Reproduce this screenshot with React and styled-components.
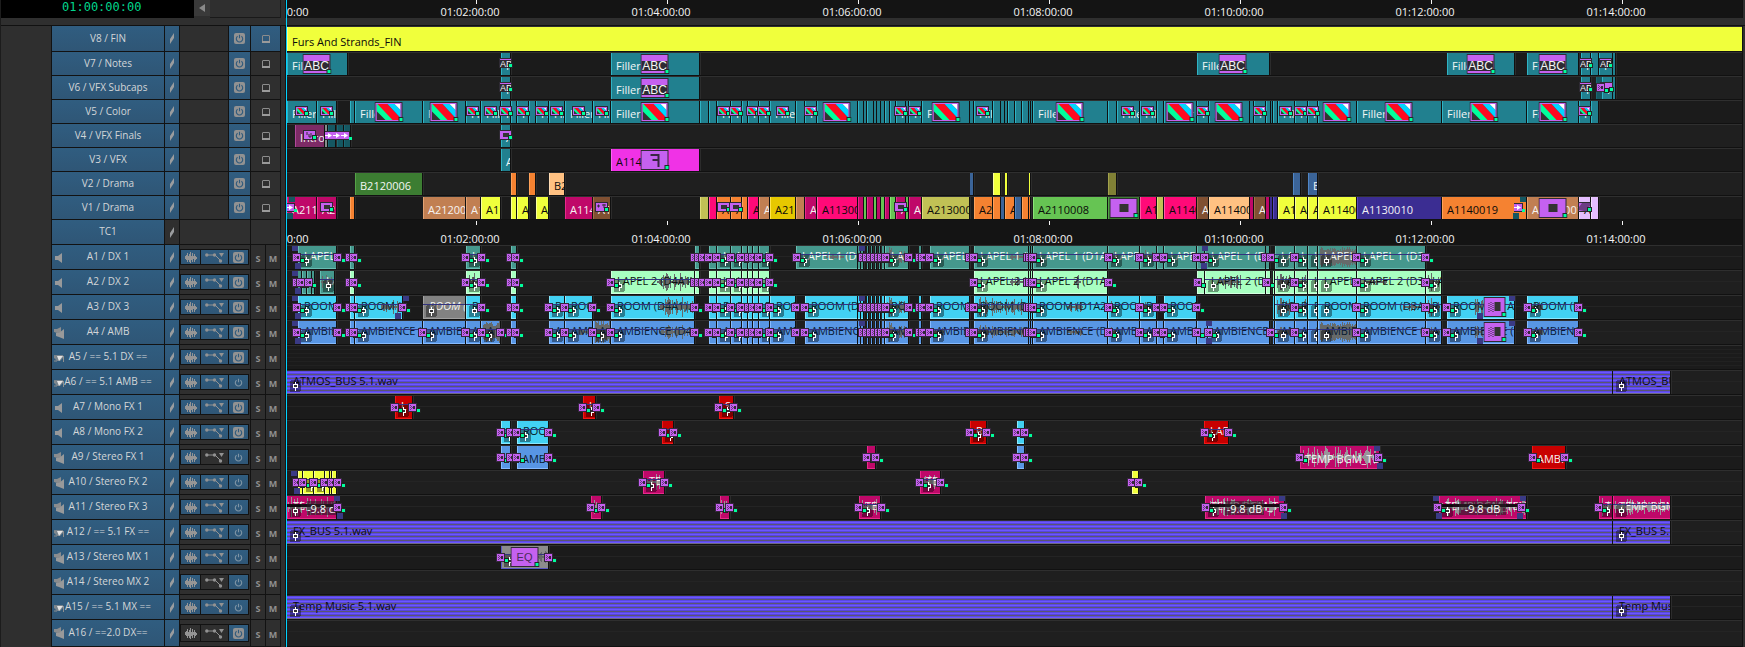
import React from "react";
import styled, { createGlobalStyle, css } from "styled-components";

const GlobalStyle = createGlobalStyle`
  * { box-sizing: border-box; }
  html, body { margin: 0; background: #2f2f2f; }
  body { font-family: "Open Sans", "Noto Sans", sans-serif; font-size: 11px; line-height: 15px; overflow-x: hidden; }
  button { font: inherit; padding: 0; margin: 0; border: 0; cursor: pointer; }
`;

/* ---------- palette: fill, light edge, text ---------- */

const PALETTE = {
  lemon: ["#f0ff3c", "#fbff8a", "#0a0a0a"],
  cyan: ["#21808f", "#2fb3c4", "#f2f6f6"],
  deep: ["#155761", "#1a6874", "#f2f6f6"],
  plum: ["#7d2b66", "#b0489a", "#f2f2f2"],
  ash: ["#858d8b", "#aab0ae", "#f2f2f2"],
  magenta: ["#f032e6", "#ff62f6", "#0a0a0a"],
  forest: ["#3c7d32", "#55a348", "#f2f6f2"],
  orange: ["#f58231", "#ffa25a", "#0a0a0a"],
  peach: ["#ffc182", "#ffdcb4", "#0a0a0a"],
  denim: ["#3b6498", "#4f86c6", "#f2f2f2"],
  yellow: ["#f0ff3c", "#fbff9a", "#0a0a0a"],
  olive: ["#808035", "#a2a24c", "#0a0a0a"],
  crimson: ["#bf0869", "#e82a8c", "#f6f2f4"],
  tan: ["#c17f52", "#e2a274", "#f6f2f0"],
  brown: ["#805032", "#a56d49", "#f6f2f0"],
  khaki: ["#c1c155", "#dede7c", "#0a0a0a"],
  pink: ["#ff0a78", "#ff5aa6", "#0a0a0a"],
  gold: ["#e6c800", "#ffe54a", "#0a0a0a"],
  green: ["#66c453", "#8be478", "#0a0a0a"],
  indigo: ["#3b2d92", "#5848c0", "#f2f2f6"],
  lilac: ["#e4bdff", "#f3e0ff", "#0a0a0a"],
  teal: ["#45988d", "#68bdb2", "#f4f8f8"],
  mint: ["#a8ffc1", "#d2ffe0", "#0c140f"],
  sky: ["#42d1f3", "#8ae8ff", "#06222b"],
  azure: ["#5896e4", "#86bbff", "#081a33"],
  gray: ["#828282", "#a0a0a0", "#f2f2f2"],
  red: ["#c80000", "#f01818", "#f6f0f0"],
  slate: ["#8c8c8c", "#5a57c4", "#f2f2f2"],
  bus: ["#5b49e8", "#6f6a80", "#0a0a12"],
};

/* ---------- timeline data: [start, end, colour, label, options] ---------- */

const run = (color, spans) =>
  spans.split(" ").map((s) => {
    const [a, b] = s.split("-").map(Number);
    return [a, b, color];
  });

const BIG = { fx: "color", big: true };
const SMALL = { fx: "color" };
const colorClips = (spans, label, opts) =>
  spans.split(" ").map((s) => {
    const [a, b] = s.split("-").map(Number);
    return [a, b, "cyan", label, opts];
  });

const ABC = { fx: "title", big: true };
const ABCS = { fx: "title" };

const VIDEO = [
  { name: "V8 / FIN", tall: true, active: true, clips: [[0, 4000, "lemon", "Furs And Strands_FIN"]] },
  {
    name: "V7 / Notes",
    clips: [
      [0, 60, "cyan", "Filler", ABC], [214, 223, "cyan", "F", ABCS], [324, 412, "cyan", "Filler", ABC],
      [910, 982, "cyan", "Filler", ABC], [1160, 1227, "cyan", "Filler", ABC], [1240, 1291, "cyan", "Filler", ABC],
      [1294, 1303, "cyan", "F", ABCS], [1304, 1311, "cyan"], [1312, 1325, "cyan", "F", ABCS], [1326, 1328, "cyan"],
    ],
  },
  {
    name: "V6 / VFX Subcaps",
    clips: [
      [214, 223, "cyan", "F", ABCS], [324, 412, "cyan", "Filler", ABC], [1294, 1303, "cyan", "F", ABCS],
      [1309, 1315, "deep"], [1315, 1325, "cyan", "F", { fx: "plain" }], [1326, 1328, "cyan"],
    ],
    dissolves: [1309],
  },
  {
    name: "V5 / Color",
    clips: [
      ...colorClips("0-29 30-49 179-193 194-213 214-223 230-241 249-261 262-277 278-305 306-323 430-443 444-454 461-471 472-482 483-508 518-529 609-618 622-634 687-705 830-852 853-869 910-921 967-978 991-1007 1008-1020 1021-1030 1292-1303", "Filler", SMALL),
      ...colorClips("68-135 136-178 324-412 530-570 635-682 746-820 877-909 922-962 1031-1069 1070-1154 1155-1239 1240-1291", "Filler", BIG),
      ...run("cyan", "63-67 224-229 242-248 413-421 422-429 455-460 509-517 571-576 577-579 580-586 587-589 590-593 594-597 598-602 603-608 619-621 683-686 706-713 714-717 718-720 721-727 728-734 735-741 742-743 744-745 821-829 870-876 963-966 979-983 984-985 986-990 1304-1311"),
    ],
  },
  {
    name: "V4 / VFX Finals",
    clips: [
      [8, 37, "plum", "Intro", { fx: "paint" }], [38, 40, "ash"], [41, 48, "deep"], [50, 56, "deep"], [57, 63, "deep"],
      [214, 223, "cyan", "A", { fx: "pip" }],
    ],
    arrows: [38, 46, 54],
  },
  { name: "V3 / VFX", clips: [[214, 223, "cyan", "A"], [324, 412, "magenta", "A1140", { fx: "flip", big: true }]] },
  {
    name: "V2 / Drama",
    clips: [
      [68, 135, "forest", "B2120006"], ...run("orange", "224-229 242-248"), [262, 277, "peach", "B2"],
      [683, 686, "denim"], ...run("yellow", "706-713 718-720 742-743"), [821, 829, "olive"],
      [1006, 1013, "denim"], [1021, 1030, "denim", "B"],
    ],
  },
  {
    name: "V1 / Drama",
    clips: [
      [0, 29, "crimson", "A2110"], [30, 49, "crimson", "A2", { fx: "pip" }], [63, 67, "orange"],
      [136, 178, "tan", "A212000"], [179, 193, "tan", "A1"], [194, 213, "yellow", "A1"], [224, 229, "yellow"],
      [230, 241, "yellow", "A"], [249, 261, "yellow", "A"], [278, 305, "crimson", "A1140"], [306, 323, "brown", "A1", { fx: "move" }],
      [413, 421, "khaki"], [422, 429, "pink"], [430, 443, "orange", "A", { fx: "pip" }], [444, 454, "orange", "A", { fx: "pip" }],
      [455, 460, "orange"], [461, 471, "pink", "A"], [472, 482, "tan", "A"], [483, 508, "gold", "A21"], [509, 517, "tan"],
      [518, 529, "crimson", "A"], [530, 570, "pink", "A113000"], ...run("crimson", "571-576 580-586 590-593 598-602"),
      ...run("green", "577-579 587-589 594-597 603-608 619-621"), [609, 618, "crimson", "A", { fx: "pip" }],
      [622, 634, "crimson", "A"], [635, 682, "khaki", "A2130000"], [687, 705, "orange", "A2"], [706, 713, "orange"],
      [714, 717, "denim"], [718, 727, "orange", "A"], [728, 734, "denim"], ...run("orange", "735-741 742-743"),
      [746, 820, "green", "A2110008"], [821, 852, "forest", "", { fx: "pip", big: true }], [853, 869, "pink", "A1"],
      [870, 876, "khaki"], [877, 909, "pink", "A1140"], [910, 921, "brown", "A"], [922, 962, "peach", "A114000"],
      [963, 966, "crimson"], [967, 978, "brown", "A"], [979, 982, "crimson"], ...run("indigo", "983-985 986-990"),
      [991, 1007, "yellow", "A1"], [1008, 1020, "yellow", "A"], [1021, 1030, "yellow", "A"], [1031, 1069, "yellow", "A11400"],
      [1070, 1154, "indigo", "A1130010"], [1155, 1239, "orange", "A1140019"],
      [1240, 1291, "tan", "A2110001", { fx: "pip", big: true }], [1292, 1303, "lilac", "A", { fx: "warp" }], [1304, 1311, "lilac"],
    ],
    fades: [[2, "top", "deep"], [0, "bottom", "deep"], [1233, "top", "deep"], [1226, "bottom", "deep"]],
    arrows: [-1, 1227],
  },
];

const V = { gain: true };
const W = (a, b, amp = 8) => ({ gain: true, wave: [a, b, amp] });
const HEAVY = { gain: true, wave: [2, 200, 11], solid: true };
const CROWD = [417, 425, 439, 449, 457, 461, 467, 478];
const STACK = [571, 575, 579, 583, 587, 590, 594];
const TRIPLE = [736, 738, 741];

const crowd = (c, label) => [
  ...run(c, "422-429 455-460 461-465 466-471"),
  [430, 443, c, label, V], [444, 454, c, label, V], [472, 482, c, label, V],
];
const stack = (c, label) => [
  ...run(c, "571-573 574-576 580-581 584-585 588-589 592-593 595-597 632-634"),
  [598, 621, c, label, W(1, 20, 10)],
];

const AUDIO = [
  {
    name: "A1 / DX 1", kind: "mono", on: true,
    clips: [
      [11, 49, "teal", "LAPEL 1", V], ...run("teal", "63-67 224-229 408-412 742-743 744-745 870-876 910-917 979-982"),
      [179, 193, "teal", "L", V], ...crowd("teal", "L"), [509, 570, "teal", "LAPEL 1 (D1A", W(30, 48, 3)], ...stack("teal", "LA"),
      [643, 682, "teal", "LAPEL 1", V], [687, 741, "teal", "LAPEL 1 (D", W(36, 52, 3)], [746, 820, "teal", "LAPEL 1 (D1A2", V],
      [821, 852, "teal", "LAPEL 1", W(5, 10, 7)], [853, 869, "teal", "L", W(4, 14, 8)], [877, 909, "teal", "LAPEL 1", V],
      [918, 978, "teal", "LAPEL 1 (D", V], [988, 1007, "teal", "LA", V], [1008, 1020, "teal", "L", V], [1021, 1030, "teal", "L", V],
      [1031, 1069, "teal", "LAPEL 1", HEAVY], [1070, 1138, "teal", "LAPEL 1 (D3A", V],
    ],
    dissolves: [5, 46, 58, 62, 174, 190, 219, 224, 403, 407, 411, ...CROWD, 505, ...STACK, 617, 628, 631, 638, 678, 682, ...TRIPLE, 817, 848, 865, 872, 905, 913, 974, 979, 1003, 1065, 1134],
    fades: [[5, "top"], [8, "bottom"], [572, "top"], [915, "top"], [914, "bottom"]],
  },
  {
    name: "A2 / DX 2", kind: "mono", on: true,
    clips: [
      ...run("teal", "11-14 15-19 20-24 25-27"), [33, 47, "teal", "LA", W(1, 13, 7)],
      ...run("mint", "63-67 224-229 408-412 742-743 744-745 910-917 979-983 986-987"), [179, 193, "mint", "L", W(3, 12, 9)],
      [324, 407, "mint", "LAPEL 2 (D4A1", W(46, 82, 9)], ...crowd("mint", "L"), [687, 741, "mint", "LAPEL 2 (", W(36, 52, 4)],
      [746, 820, "mint", "LAPEL 2 (D1A", W(41, 48, 11)], [918, 978, "mint", "LAPEL 2 (D", W(14, 36, 7)],
      [988, 1007, "mint", "LA", W(2, 18, 9)], [1008, 1020, "mint", "L", W(1, 12, 8)], [1021, 1030, "mint", "L", V],
      [1031, 1069, "mint", "LAPEL 2", V], [1070, 1138, "mint", "LAPEL 2 (D3A", W(8, 30, 4)], [1139, 1154, "mint", "LA", W(2, 14, 9)],
    ],
    dissolves: [5, 9, 17, 58, 62, 174, 190, 219, 224, 319, 403, 407, 411, ...CROWD, 682, ...TRIPLE, 817, 906, 975, 1003, 1065, 1134],
    fades: [[5, "top"], [8, "bottom"]],
  },
  {
    name: "A3 / DX 3", kind: "mono", on: true,
    clips: [
      [11, 49, "sky", "ROOM (", V], ...run("sky", "63-67 224-229 742-743 744-745 986-987"), [68, 115, "sky", "ROOM (", W(26, 44, 7)],
      [136, 178, "gray", "ROOM (D", { gain: true, italic: true }], [179, 193, "sky", "R", V], [262, 277, "sky", "R", V],
      [278, 305, "sky", "ROOM", V], [324, 407, "sky", "ROOM (D4A1).", W(48, 82, 10)], ...crowd("sky", "R"),
      [483, 508, "sky", "ROOM", V], [518, 570, "sky", "ROOM (D1", V], ...stack("sky", "RO"), [643, 682, "sky", "ROOM (", V],
      [687, 741, "sky", "ROOM (D1", W(4, 50, 10)], [746, 820, "sky", "ROOM (D1A2", W(34, 50, 7)], [821, 852, "sky", "ROOM", W(2, 6, 7)],
      [853, 869, "sky", "R", W(4, 14, 6)], [877, 909, "sky", "ROOM", V], [988, 1007, "sky", "RO", W(2, 18, 10)],
      [1008, 1020, "sky", "R", W(1, 12, 9)], [1021, 1030, "sky", "R", V], [1031, 1069, "sky", "ROOM (", V],
      [1070, 1138, "sky", "ROOM (D3A", W(46, 66, 5)], [1139, 1154, "sky", "R", W(2, 14, 9)],
      [1160, 1227, "sky", "ROOM (D1A", { gain: true, wave: [28, 36, 9], fx: "dissolve", big: true }],
      [1240, 1291, "sky", "ROOM (D", W(4, 16, 7)],
    ],
    dissolves: [5, 46, 58, 62, 111, 190, 219, 224, 257, 273, 301, 319, 403, ...CROWD, 504, 513, ...STACK, 617, 628, 631, 638, 678, 682, ...TRIPLE, 817, 848, 865, 872, 905, 1003, 1065, 1134, 1155, 1236, 1287],
    fades: [[5, "top"], [8, "bottom"], [116, "top"], [108, "bottom"], [572, "top"], [1222, "top"], [1190, "bottom"]],
  },
  {
    name: "A4 / AMB", kind: "stereo", on: true,
    clips: [
      [11, 49, "azure", "AMBIENCE", V], ...run("azure", "63-67 224-229 742-743 744-745 870-876 986-987"), [68, 135, "azure", "AMBIENCE (", V],
      [136, 178, "azure", "AMBIENCE", V], [179, 193, "azure", "A", V], [194, 213, "azure", "A", HEAVY], [262, 277, "azure", "A", V],
      [278, 305, "azure", "AMBI", W(14, 24, 4)], [306, 323, "azure", "A", HEAVY], [324, 407, "azure", "AMBIENCE (D4A", W(48, 82, 7)],
      ...crowd("azure", "A"), [483, 508, "azure", "AMBI", V], [518, 570, "azure", "AMBIENCE", V], ...stack("azure", "AM"),
      [643, 682, "azure", "AMBIENCE", W(4, 14, 5)], [687, 741, "azure", "AMBIENCE (", W(4, 50, 7)],
      [746, 820, "azure", "AMBIENCE (D1", W(34, 50, 5)], [821, 852, "azure", "AMBIENCE", W(2, 8, 6)], [853, 869, "azure", "A", V],
      [877, 909, "azure", "AMBIENCE", V], [910, 920, "azure"], [921, 982, "azure", "AMBIENCE (", V], [988, 1007, "azure", "AM", W(2, 18, 5)],
      [1008, 1020, "azure", "A", V], [1021, 1030, "azure", "A", V], [1031, 1069, "azure", "AMBIENCE", HEAVY],
      [1070, 1138, "azure", "AMBIENCE (D", V], [1139, 1154, "azure", "A", W(2, 14, 5)],
      [1160, 1227, "azure", "AMBIENCE (D", { gain: true, wave: [28, 36, 6], fx: "dissolve", big: true }],
      [1240, 1291, "azure", "AMBIENCE", W(4, 16, 6)],
    ],
    dissolves: [5, 46, 58, 62, 131, 174, 190, 209, 219, 224, 257, 273, 301, 319, 403, ...CROWD, 504, 513, ...STACK, 617, 628, 631, 638, 678, 682, ...TRIPLE, 817, 848, 865, 872, 905, 917, 979, 1003, 1065, 1134, 1155, 1236, 1287],
    fades: [[5, "top"], [8, "bottom"], [572, "top"], [919, "top"], [919, "bottom"], [1222, "top"], [1190, "bottom"]],
  },
  { name: "A5 / == 5.1 DX ==", kind: "surround", on: true, channels: 6 },
  { name: "A6 / == 5.1 AMB ==", kind: "surround", clips: [[0, 1325, "bus", "ATMOS_BUS 5.1.wav", V], [1326, 1383, "bus", "ATMOS_BUS 5.1.wav", V]] },
  {
    name: "A7 / Mono FX 1", kind: "mono", on: true,
    clips: [[108, 125, "red", "L", V], [296, 308, "red", "L", V], [432, 446, "red", "S", V]],
    dissolves: [103, 121, 291, 305, 427, 442],
  },
  {
    name: "A8 / Mono FX 2", kind: "mono", on: true,
    clips: [[214, 223, "sky", "", V], [230, 261, "sky", "ROOM", V], [375, 386, "red", "", V], [683, 699, "red", "R", V], [730, 737, "sky"], [917, 941, "red", "LAP", V]],
    dissolves: [209, 219, 225, 257, 371, 382, 678, 695, 725, 733, 913, 937],
  },
  {
    name: "A9 / Stereo FX 1", kind: "stereo", noAuto: true,
    clips: [
      [214, 223, "azure", "A", { low: true }], [230, 261, "azure", "AMBI", { low: true }], [580, 588, "crimson"], [730, 737, "azure"],
      [1013, 1092, "crimson", "TEMP BGM_TEN", { low: true, wave: [2, 78, 11], pale: true }], [1245, 1278, "red", "AMBI", { low: true }],
    ],
    dissolves: [209, 219, 225, 257, 575, 584, 725, 733, 1008, 1087, 1241, 1273],
    fades: [[1087, "top"], [1090, "bottom"]],
  },
  {
    name: "A10 / Stereo FX 2", kind: "stereo",
    clips: [
      ...run("yellow", "11-15 38-42 43-44 45-49 845-851"), [16, 26, "yellow", "", V], [27, 37, "yellow", "", V],
      [356, 377, "crimson", "TE", { gain: true, wave: [2, 20, 9], pale: true }], [633, 653, "crimson", "TE", { gain: true, wave: [2, 19, 9], pale: true }],
    ],
    dissolves: [5, 11, 22, 33, 40, 46, 351, 373, 628, 649, 840, 847],
    fades: [[4, "top"], [7, "bottom"]],
  },
  {
    name: "A11 / Stereo FX 3", kind: "stereo",
    clips: [
      [0, 49, "crimson", "TE", { gain: true, wave: [1, 48, 10], pale: true, db: "-9.8 dB" }],
      [304, 314, "crimson", "", { wave: [1, 9, 8], pale: true }], [433, 442, "crimson", "", { wave: [1, 8, 8], pale: true }],
      [572, 593, "crimson", "TE", { gain: true, wave: [2, 19, 9], pale: true }],
      [918, 997, "crimson", "TEMP BGM_T", { gain: true, wave: [1, 78, 9], pale: true, db: "-9.8 dB" }],
      [1152, 1239, "crimson", "TEMP BGM_TEN", { gain: true, wave: [1, 86, 9], pale: true, db: "-9.8 dB" }],
      [1312, 1325, "crimson", "T", { gain: true, wave: [1, 12, 10], pale: true }],
      [1326, 1383, "crimson", "TEMP BGM_T", { gain: true, wave: [1, 56, 9], pale: true }],
    ],
    dissolves: [46, 299, 310, 428, 438, 567, 590, 914, 992, 1146, 1230, 1307],
    fades: [[47, "top"], [50, "bottom"], [992, "top"], [994, "bottom"], [1146, "top"], [1149, "bottom"], [1233, "top"], [1230, "bottom"]],
  },
  { name: "A12 / == 5.1 FX ==", kind: "surround", clips: [[0, 1325, "bus", "FX_BUS 5.1.wav", V], [1326, 1383, "bus", "FX_BUS 5.1.wav", V]] },
  {
    name: "A13 / Stereo MX 1", kind: "stereo",
    clips: [[214, 261, "slate", "", { gain: true, fx: "eq", big: true, wave: [30, 46, 8] }]],
    dissolves: [209, 257],
  },
  { name: "A14 / Stereo MX 2", kind: "stereo", noAuto: true },
  { name: "A15 / == 5.1 MX ==", kind: "surround", clips: [[0, 1325, "bus", "Temp Music 5.1.wav", V], [1326, 1383, "bus", "Temp Music 5.1.wav", V]] },
  { name: "A16 / ==2.0 DX==", kind: "stereo", noAuto: true, noWave: true, on: true, last: true },
];

const TICKS = Array.from({ length: 8 }, (_, i) => ({
  at: i * 191 - 2,
  label: `01:${String(i * 2).padStart(2, "0")}:00:00`,
}));

/* ---------- icons ---------- */

const Glyph = styled.svg`
  display: block;
  flex: none;
`;

const PowerIcon = ({ on }) => (
  <Glyph width="11" height="11" viewBox="0 0 11 11" aria-hidden="true">
    {on && <rect width="11" height="11" rx="2" fill="#929292" />}
    <path d="M3.6 3.2a3.2 3.2 0 1 0 3.8 0M5.5 1.7v3.6" fill="none" stroke={on ? "#2f5a7c" : "#7f95a5"} strokeWidth="1.1" />
  </Glyph>
);

const MonitorIcon = () => (
  <Glyph width="8" height="8" viewBox="0 0 8 8" aria-hidden="true">
    <rect x=".5" y=".5" width="7" height="7" rx=".5" fill="none" stroke="#8c8c8c" />
    <path d="M0 7h8" stroke="#9a9a9a" strokeWidth="2" />
  </Glyph>
);

const SyncIcon = () => (
  <Glyph width="6" height="11" viewBox="0 0 6 11" aria-hidden="true">
    <path d="M5 0v5L1 11V6z" fill="#9a9c9e" />
  </Glyph>
);

const WaveIcon = () => (
  <Glyph width="12" height="11" viewBox="0 0 12 11" aria-hidden="true">
    <path d="M.5 4v3M1.500 3v5M2.500 1v9M3.500 4v4M4.500 2v8M5.500 0v11M6.500 4v4M7.500 1v9M8.500 4v3M9.500 2v8M10.500 4v4M11.500 5v2" stroke="#959595" />
  </Glyph>
);

const AutomationIcon = () => (
  <Glyph width="19" height="12" viewBox="0 0 19 12" aria-hidden="true">
    <path d="M2 4h8l6 6" fill="none" stroke="#929292" />
    <circle cx="1.800" cy="4" r="1.700" fill="#929292" />
    <circle cx="9.500" cy="4" r="1.700" fill="#929292" />
    <circle cx="15.500" cy="10" r="1.700" fill="#929292" />
    <path d="M14 2h5l-2.500 4z" fill="#929292" />
  </Glyph>
);

const SourceIcon = ({ kind }) => (
  <Glyph width="11" height="12" viewBox="0 0 11 12" aria-hidden="true">
    {kind === "mono" && <path d="M1 4h3l4-3v10L4 8H1z" fill="#98999a" />}
    {kind === "stereo" && (
      <>
        <path d="M0 2h3l4-2v6H3L0 5z" fill="#8a8c8e" />
        <path d="M2 6h3l5-4v10L5 10 2 9z" fill="#98999a" />
      </>
    )}
    {kind === "surround" && (
      <>
        <path d="M0 3h9v3L6 9H3L0 6z" fill="#77838c" />
        <path d="M3 4h6L5 9z" fill="#e4e4e4" />
        <path d="M0 9h3M9.500 4v6M0 5h2" stroke="#8f8f8f" />
      </>
    )}
  </Glyph>
);

const Dot = ({ x, y }) => (
  <>
    <rect x={x - 1} y={y - 1} width="5" height="5" fill="#26262a" />
    <rect x={x} y={y} width="3" height="3" fill="#00ff9c" />
  </>
);

const FX_FILL = "#c561f0";
const INK = "#2e2a33";

function FxIcon({ type, big }) {
  const w = big ? (type === "dissolve" ? 22 : 28) : 13;
  const h = big ? 20 : 10;
  return (
    <Glyph width={w + 1} height={h} viewBox={`0 0 ${w + 1} ${h}`} aria-hidden="true">
      <rect x="0" y="0" width={w} height={h} fill={INK} />
      <rect x="1" y="1" width={w - 2} height={h - 2} fill={FX_FILL} />
      {type === "color" && (
        <svg x="2" y="2" width={w - 4} height={h - 4} viewBox="0 0 24 16" preserveAspectRatio="none">
          <rect width="24" height="16" fill="#333" />
          <path d="M0 0h2l16 16H9L0 7z" fill="#00ff9c" />
          <path d="M1 0h10l13 14v2H16z" fill="#ff0a20" />
          <path d="M11 0h7l6 6v8z" fill="#00d5ff" />
          <path d="M18 0h6v6z" fill="#fff" />
        </svg>
      )}
      {type === "title" && big && (
        <>
          <rect x="1" y="7" width="26" height="10" fill="#2e2a33" />
          <text x="14" y="16" textAnchor="middle" fontFamily="Liberation Sans, sans-serif" fontSize="12" fill="#f4f4f4">ABC</text>
        </>
      )}
      {type === "title" && !big && (
        <svg x="1" y="0" width="11" height="10">
          <rect y="2" width="11" height="7" fill="#2e2a33" />
          <text x="0" y="9" fontFamily="Liberation Sans, sans-serif" fontSize="9" fill="#f4f4f4">ABC</text>
        </svg>
      )}
      {type === "pip" && <rect x={big ? 10 : 4} y={big ? 6 : 3} width={big ? 9 : 6} height={big ? 8 : 4} fill="#333" />}
      {type === "flip" && (
        <>
          <rect x="17" y="4" width="2" height="13" fill="#3a2545" />
          <rect x="10" y="4" width="8" height="2" fill="#3a2545" />
          <rect x="12" y="9" width="6" height="2" fill="#3a2545" />
        </>
      )}
      {type === "eq" && <text x="14" y="14" textAnchor="middle" fontFamily="Liberation Sans, sans-serif" fontSize="11" fill="#4a2c5a">EQ</text>}
      {type === "dissolve" && (
        <>
          <rect x="11" y="5" width="6" height="9" fill="#333" />
          <path d="M5.500 6v9M7.500 5v9M9.500 6v9" stroke="#333" strokeDasharray="1 1" />
        </>
      )}
      {type === "paint" && <path d="M4 2v3M6 4v3h2V3" fill="none" stroke="#333" />}
      {type === "move" && <path d="M2 4h3M3.500 2.500v3M7 3h4M9 2v4" fill="none" stroke="#333" />}
      {type === "warp" && <path d="M1 8V5l3-4h8v3L9 6v3H6z" fill="#6d3b85" />}
      <Dot x={w - 3} y={h - 4} />
    </Glyph>
  );
}

const DissolveIcon = () => (
  <Glyph width="13" height="10" viewBox="0 0 13 10" shapeRendering="crispEdges" aria-hidden="true">
    <rect width="9" height="9" fill="#35283d" />
    <rect x="1" y="1" width="7" height="7" fill={FX_FILL} />
    <path d="M5 3h2v3H5z" fill="#35283d" />
    <path d="M2 2h1v1H2zM3 3h1v1H3zM2 4h1v1H2zM4 4h1v1H4zM3 5h1v1H3zM2 6h1v1H2z" fill="#6a3a80" />
    <rect x="8" y="5" width="5" height="5" fill="#222" />
    <rect x="9" y="6" width="3" height="3" fill="#00ff9c" />
  </Glyph>
);

const ArrowIcon = () => (
  <Glyph width="11" height="9" viewBox="0 0 11 9" aria-hidden="true">
    <rect width="9" height="9" fill={INK} />
    <rect x="0" y="1" width="8" height="7" fill={FX_FILL} />
    <path d="M0 4h3V2l4 2.500L3 7V5H0z" fill="#fff" />
    <rect x="8" y="6" width="3" height="3" fill="#00ff9c" />
  </Glyph>
);

const GainIcon = () => (
  <Glyph width="11" height="12" viewBox="0 0 11 12" shapeRendering="crispEdges" aria-hidden="true">
    <rect width="11" height="12" rx="2" fill="#000" opacity=".4" />
    <path d="M5 2h1v2H5zM3 4h5v4H3zM5 8h1v3H5z" fill="#fff" />
    <path d="M4 5h3v2H4z" fill="#333" />
  </Glyph>
);

function Waveform({ from, to, amp, solid, pale, seed }) {
  let s = seed * 7919 + 13;
  const rnd = () => ((s = (s * 1103515245 + 12345) % 2147483648) / 2147483648);
  let d = "";
  for (let x = from; x < to; x++) {
    const floor = solid ? 0.55 : 0.08;
    const k = floor + (1 - floor) * Math.pow(rnd(), solid ? 1 : 2);
    const half = Math.max(1, Math.round(amp * k));
    d += `M${x} ${12 - half}h1v${half * 2}h-1z`;
  }
  return (
    <WaveSvg width={to} height="24" shapeRendering="crispEdges" aria-hidden="true">
      <path d={d} fill={pale ? "#999499" : "#666a6a"} />
    </WaveSvg>
  );
}

/* ---------- layout ---------- */

const Editor = styled.main`
  position: relative;
  min-height: 100vh;
  background: #2f2f2f;
  border-left: 1px solid #1c1c1c;
  color: #d3d6d8;
`;

const TopBar = styled.header`
  display: flex;
  height: 18px;
`;

const Timecode = styled.div`
  width: 193px;
  background: #000;
  color: #00d68c;
  font-family: "DejaVu Sans Mono", monospace;
  font-size: 12px;
  line-height: 15px;
  padding-left: 61px;
`;

const ScrollButton = styled.button`
  width: 16px;
  height: 16px;
  background: #3a3a3a;
  display: grid;
  place-items: center;
`;

const TopSpacer = styled.div`
  width: 71px;
  border-right: 1px solid #191919;
  border-bottom: 1px solid #191919;
`;

const Gutter = styled.div`
  flex: none;
  width: 6px;
  border-right: 2px solid #151515;
`;

const Rail = styled.div`
  flex: 1;
  min-width: 0;
  position: relative;
  overflow: hidden;
  background: #141414;
`;

const RightEdge = styled.div`
  flex: none;
  width: 3px;
  background: #2f2f2f;
  border-left: 1px solid #111;
`;

const Tick = styled.span`
  position: absolute;
  top: ${(p) => (p.$sub ? 1 : 0)}px;
  width: 1px;
  height: 4px;
  background: #f4f4f4;
`;

const TickLabel = styled.span`
  position: absolute;
  top: ${(p) => (p.$sub ? 11 : 4)}px;
  width: 70px;
  margin-left: -41px;
  text-align: center;
  color: #f4f4f4;
`;

const Tracks = styled.section`
  margin-top: 7px;
  border-top: 1px solid #111;
`;

const Track = styled.div`
  display: flex;
  height: ${(p) => p.$height}px;
`;

const Head = styled.div`
  flex: none;
  margin-left: 50px;
  width: 230px;
  display: flex;
  gap: 1px;
  padding: 0 1px 1px;
  background: #121212;
`;

const Cell = styled.button`
  flex: none;
  width: ${(p) => p.$w}px;
  display: flex;
  align-items: center;
  justify-content: center;
  background: ${(p) => (p.$on ? "linear-gradient(#305d80, #2f5676)" : "#2f2f2f")};
`;

const LetterCell = styled(Cell)`
  width: 14px;
  padding-top: 2px;
  color: #8f8f8f;
  font-weight: 700;
  font-size: 9px;
`;

const Filler = styled.div`
  flex: none;
  width: ${(p) => p.$w}px;
  background: #2f2f2f;
`;

const Name = styled.button`
  position: relative;
  flex: none;
  width: 112px;
  padding-bottom: 1px;
  background: linear-gradient(#305d80, #2f5676);
  color: #d3d6d8;
  font-size: 10px;
  text-align: center;
  white-space: nowrap;
`;

const Source = styled.span`
  position: absolute;
  left: 2px;
  top: 7px;
`;

const Tools = styled.div`
  flex: none;
  width: 70px;
  background: #2f2f2f;
  padding: 4px 1px 4px 0;
  display: flex;
`;

const ToolGroup = styled.div`
  display: flex;
  gap: 1px;
  padding: 1px;
  background: #121212;
`;

const Lane = styled.div`
  flex: 1;
  min-width: 0;
  position: relative;
  overflow: hidden;
  background: ${(p) => (p.$odd ? "#1b1b1b" : "#1f1f1f")};
  border-top: 1px solid #2f2f2f;
  border-bottom: 1px solid #111;
  ${(p) =>
    p.$audio &&
    css`
      background-image: linear-gradient(transparent 10px, #242424 10px, #242424 11px, transparent 11px);
    `}
  ${(p) =>
    p.$channels &&
    css`
      background-image: repeating-linear-gradient(#1b1b1b 0 3px, #212121 3px 4px);
    `}
`;

const ClipBox = styled.div`
  position: absolute;
  top: -1px;
  bottom: 0;
  overflow: hidden;
  white-space: nowrap;
  display: flex;
  align-items: ${(p) => (p.$audio && !p.$low ? "flex-start" : "flex-end")};
  background: ${(p) => PALETTE[p.$color][0]};
  color: ${(p) => PALETTE[p.$color][2]};
  font-style: ${(p) => (p.$italic ? "italic" : "normal")};
  border-top: 1px solid ${(p) => PALETTE[p.$color][1]};
  ${(p) => p.$audio && `border-bottom: 1px solid ${PALETTE[p.$color][1]};`}
  ${(p) =>
    p.$color === "bus" &&
    css`
      background: repeating-linear-gradient(#5b49e2 0 1px, #6c57ff 1px 2px, #5846dc 2px 3px, #5a5670 3px 4px);
    `}
`;

const ClipEdge = styled.div`
  position: absolute;
  top: 0;
  bottom: 0;
  border-left: 1px solid #101010;
  border-right: 1px solid #2c2c2c;
  width: 2px;
`;

const ClipLabel = styled.span`
  position: relative;
  margin: ${(p) => (p.$top ? "2px 0 0 6px" : "0 0 2px 5px")};
`;

const LeftLight = styled.div`
  position: absolute;
  inset: 0 auto 0 0;
  width: 1px;
  background: ${(p) => PALETTE[p.$color][1]};
`;

const WaveSvg = styled.svg`
  position: absolute;
  left: 0;
  top: -1px;
`;

const GainLine = styled.div`
  position: absolute;
  left: 0;
  right: 0;
  top: 8px;
  height: ${(p) => (p.$thick ? 3 : 1)}px;
  background: ${(p) => (p.$thick ? "#1a0a14" : "#33337f")};
`;

const GainMark = styled.span`
  position: absolute;
  left: 3px;
  top: 9px;
`;

const GainValue = styled.span`
  position: absolute;
  inset: 5px auto 3px 20px;
  min-width: calc(100% - 40px);
  text-align: center;
  color: #fff;
  background: rgba(40, 30, 36, 0.6);
`;

const FxMark = styled.span`
  position: absolute;
  top: ${(p) => (p.$big ? 1 : 5)}px;
  transform: translateX(-50%);
`;

const EditMark = styled.span`
  position: absolute;
  top: ${(p) => (p.$audio ? 7 : 6)}px;
`;

const Fade = styled.span`
  position: absolute;
  width: 6px;
  height: 6px;
  ${(p) => (p.$at === "top" ? "top: -1px;" : "bottom: 0;")}
  background: ${(p) => (p.$deep ? "#155761" : "#3a3a85")};
`;

const Playhead = styled.div`
  position: absolute;
  left: 285px;
  top: 0;
  bottom: 0;
  width: 1px;
  background: #00d2ff;
`;

/* ---------- parts ---------- */

const Ruler = ({ sub }) => (
  <Rail>
    {TICKS.map((t) => (
      <React.Fragment key={t.label}>
        <Tick $sub={sub} style={{ left: t.at }} />
        <TickLabel $sub={sub} style={{ left: t.at }}>{t.label}</TickLabel>
      </React.Fragment>
    ))}
  </Rail>
);

function Clip({ clip, audio }) {
  const [start, end, color, label, opts = {}] = clip;
  return (
    <>
      <ClipEdge style={{ left: end }} />
      <ClipBox $color={color} $audio={audio} $low={opts.low} $italic={opts.italic} style={{ left: start, width: end - start }}>
        {end - start > 3 && color !== "bus" && <LeftLight $color={color} />}
        {opts.wave && (
          <Waveform from={opts.wave[0]} to={Math.min(opts.wave[1], end - start)} amp={opts.wave[2]} solid={opts.solid} pale={opts.pale} seed={start} />
        )}
        {label && <ClipLabel $top={audio && !opts.low}>{label}</ClipLabel>}
        {opts.gain && color !== "bus" && <GainLine $thick={Boolean(opts.db)} />}
        {opts.db && <GainValue>{opts.db}</GainValue>}
        {opts.gain && <GainMark><GainIcon /></GainMark>}
      </ClipBox>
    </>
  );
}

function TrackLane({ track, audio, odd }) {
  const clips = [...(track.clips || [])].sort((a, b) => a[0] - b[0]);
  return (
    <Lane $odd={odd} $audio={audio} $channels={track.channels}>
      {clips.map((c) => <Clip key={c[0]} clip={c} audio={audio} />)}
      {(track.fades || []).map(([x, at, tone]) => <Fade key={`${x}${at}`} $at={at} $deep={tone} style={{ left: x }} />)}
      {clips.filter((c) => c[4] && c[4].fx).map((c) => (
        <FxMark key={c[0]} $big={c[4].big} style={{ left: Math.round((c[0] + c[1]) / 2 + (c[4].fx === "dissolve" ? 14 : 0)) }}>
          <FxIcon type={c[4].fx} big={c[4].big} />
        </FxMark>
      ))}
      {(track.dissolves || []).map((x) => <EditMark key={x} $audio={audio} style={{ left: x }}><DissolveIcon /></EditMark>)}
      {(track.arrows || []).map((x) => <EditMark key={x} style={{ left: x }}><ArrowIcon /></EditMark>)}
    </Lane>
  );
}

const VideoTrack = ({ track, odd }) => (
  <Track $height={track.tall ? 26 : 24}>
    <Head>
      <Name>{track.name}</Name>
      <Cell $w={14} $on aria-label={`Sync lock ${track.name}`}><SyncIcon /></Cell>
      <Filler $w={48} />
      <Cell $w={21} $on aria-label={`Enable ${track.name}`}><PowerIcon on /></Cell>
      <Cell $w={29} $on={track.active} aria-label={`Monitor ${track.name}`}><MonitorIcon /></Cell>
    </Head>
    <Gutter />
    <TrackLane track={track} odd={odd} />
    <RightEdge />
  </Track>
);

const AudioTrack = ({ track, odd }) => (
  <Track $height={track.last ? 27 : 25}>
    <Head>
      <Name>
        <Source><SourceIcon kind={track.kind} /></Source>
        {track.name}
      </Name>
      <Cell $w={14} $on aria-label={`Sync lock ${track.name}`}><SyncIcon /></Cell>
      <Tools>
        <ToolGroup>
          <Cell $w={19} $on={!track.noWave} aria-label={`Waveform ${track.name}`}><WaveIcon /></Cell>
          <Cell $w={27} $on={!track.noAuto} aria-label={`Automation ${track.name}`}><AutomationIcon /></Cell>
          <Cell $w={19} $on aria-label={`Enable ${track.name}`}><PowerIcon on={track.on} /></Cell>
        </ToolGroup>
      </Tools>
      <LetterCell aria-label={`Solo ${track.name}`}>S</LetterCell>
      <LetterCell aria-label={`Mute ${track.name}`}>M</LetterCell>
    </Head>
    <Gutter />
    <TrackLane track={track} audio odd={odd} />
    <RightEdge />
  </Track>
);

export default function App() {
  return (
    <>
      <GlobalStyle />
      <Editor>
        <TopBar>
          <Timecode>01:00:00:00</Timecode>
          <ScrollButton aria-label="Scroll left">
            <Glyph width="6" height="8" viewBox="0 0 6 8" aria-hidden="true"><path d="M6 0v8L0 4z" fill="#8a8a8a" /></Glyph>
          </ScrollButton>
          <TopSpacer />
          <Gutter />
          <Ruler />
          <RightEdge />
        </TopBar>
        <Tracks>
          {VIDEO.map((t, i) => <VideoTrack key={t.name} track={t} odd={i % 2 === 1} />)}
          <Track $height={25}>
            <Head>
              <Name>TC1</Name>
              <Cell $w={14} aria-label="Sync lock TC1"><SyncIcon /></Cell>
              <Filler $w={70} />
              <Filler $w={29} />
            </Head>
            <Gutter />
            <Ruler sub />
            <RightEdge />
          </Track>
          {AUDIO.map((t, i) => <AudioTrack key={t.name} track={t} odd={i % 2 === 0} />)}
        </Tracks>
        <Playhead />
      </Editor>
    </>
  );
}
